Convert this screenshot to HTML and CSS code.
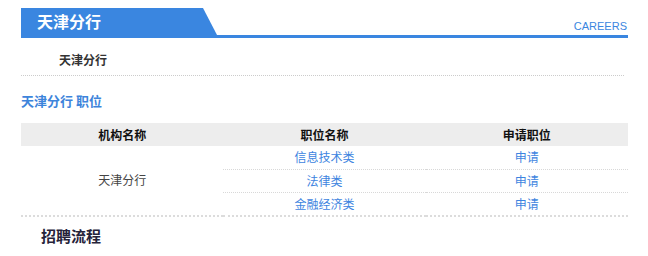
FILE: index.html
```html
<!DOCTYPE html>
<html>
<head>
<meta charset="utf-8">
<link rel="stylesheet" href="styles.css">
</head>
<body>
<div class="page">
  <div class="header">
    <div class="tab">天津分行</div>
    <div class="careers">CAREERS</div>
  </div>
  <div class="branch">天津分行</div>
  <div class="title">天津分行 职位</div>
  <table class="jobs">
    <thead>
      <tr><th>机构名称</th><th>职位名称</th><th>申请职位</th></tr>
    </thead>
    <tbody>
      <tr><td class="org" rowspan="3">天津分行</td><td><a>信息技术类</a></td><td><a>申请</a></td></tr>
      <tr><td><a>法律类</a></td><td><a>申请</a></td></tr>
      <tr class="last"><td><a>金融经济类</a></td><td><a>申请</a></td></tr>
    </tbody>
  </table>
  <div class="process">招聘流程</div>
</div>
</body>
</html>
```
FILE: styles.css
```css
* { box-sizing: border-box; }
body {
  margin: 0;
  background: #fff;
  font-family: "Noto Sans CJK SC", "Liberation Sans", sans-serif;
  font-size: 12px;
}
.page {
  margin-left: 21px;
  width: 607px;
  padding-top: 8px;
}
.header {
  display: flex;
  justify-content: space-between;
  align-items: flex-end;
  border-bottom: 3px solid #3a86e0;
  height: 30px;
}
.tab {
  width: 196px;
  height: 27px;
  background: #3a86e0;
  clip-path: polygon(0 0, 182px 0, 196px 100%, 0 100%);
  color: #fff;
  font-size: 16px;
  font-weight: bold;
  line-height: 27px;
  padding-left: 16px;
}
.careers {
  font-family: "Liberation Sans", Arial, sans-serif;
  font-size: 11px;
  color: #3a86e0;
  line-height: 13px;
  margin-bottom: 2px;
  padding-right: 1px;
}
.branch {
  height: 38px;
  line-height: 18px;
  padding: 13px 0 0 38px;
  font-weight: bold;
  color: #333;
  border-bottom: 1px dotted #ccc;
  margin-right: 4px;
}
.title {
  margin-top: 15px;
  font-size: 13px;
  font-weight: bold;
  color: #3d84db;
  line-height: 20px;
  height: 32px;
}
.jobs {
  width: 607px;
  border-collapse: collapse;
  table-layout: fixed;
}
.jobs th {
  background: #ededed;
  height: 23px;
  padding: 0;
  font-size: 12px;
  font-weight: bold;
  color: #111;
  text-align: center;
}
.jobs td {
  height: 23px;
  padding: 0;
  text-align: center;
  border-bottom: 1px dotted #d8d8d8;
  line-height: 22px;
}
.jobs tr.last td, .jobs td.org {
  border-bottom: 2px dotted #dcdcdc;
}
.jobs td.org {
  color: #444;
}
.jobs a {
  color: #3d84e0;
  text-decoration: none;
}
.process {
  margin-top: 9px;
  padding-left: 20px;
  font-size: 15px;
  font-weight: bold;
  color: #26233a;
  line-height: 20px;
}
```
